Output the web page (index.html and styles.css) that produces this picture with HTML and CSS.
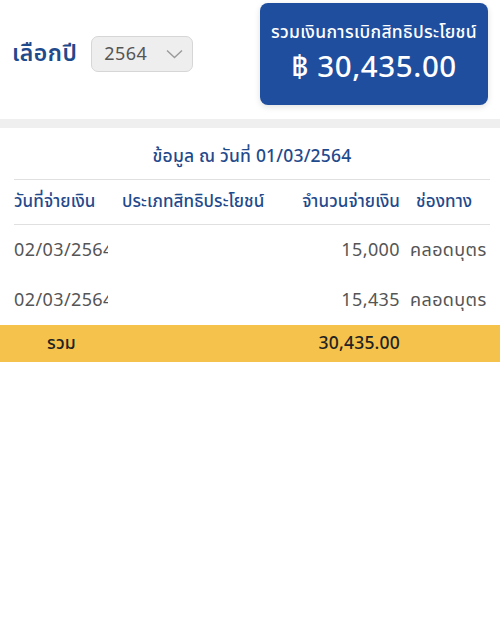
FILE: index.html
```html
<!DOCTYPE html>
<html lang="th">
<head>
<meta charset="utf-8">
<link rel="stylesheet" href="styles.css">
</head>
<body>
<div class="top">
  <div class="year">
    <span class="year-label">เลือกปี</span>
    <div class="select">
      <span>2564</span>
      <svg class="chev" width="17" height="10" viewBox="0 0 17 10"><path d="M1 1.5 L8.5 8.5 L16 1.5" fill="none" stroke="#9a9a9a" stroke-width="1.4"/></svg>
    </div>
  </div>
  <div class="card">
    <div class="card-title">รวมเงินการเบิกสิทธิประโยชน์</div>
    <div class="card-amount">฿ 30,435.00</div>
  </div>
</div>
<div class="band"></div>
<div class="data">
  <div class="asof">ข้อมูล ณ วันที่ 01/03/2564</div>
  <div class="row head">
    <div class="c1">วันที่จ่ายเงิน</div>
    <div class="c2">ประเภทสิทธิประโยชน์</div>
    <div class="c3">จำนวนจ่ายเงิน</div>
    <div class="c4">ช่องทาง</div>
  </div>
  <div class="row body">
    <div class="c1 clip">02/03/2564</div>
    <div class="c2"></div>
    <div class="c3">15,000</div>
    <div class="c4">คลอดบุตร</div>
  </div>
  <div class="row body">
    <div class="c1 clip">02/03/2564</div>
    <div class="c2"></div>
    <div class="c3">15,435</div>
    <div class="c4">คลอดบุตร</div>
  </div>
</div>
<div class="total">
  <div class="t1">รวม</div>
  <div class="t3">30,435.00</div>
</div>
</body>
</html>
```

FILE: styles.css
```css
* { box-sizing: border-box; }
body {
  margin: 0;
  background: #fff;
  font-family: "Noto Sans Thai", "Noto Sans", "DejaVu Sans", sans-serif;
  color: #555;
}
.top {
  height: 119px;
  display: flex;
  justify-content: space-between;
  align-items: flex-start;
  padding: 3px 12px 0 12px;
}
.year {
  display: flex;
  align-items: center;
  gap: 14px;
  margin-top: 33px;
}
.year-label {
  font-size: 23px;
  font-weight: 600;
  letter-spacing: 0.5px;
  color: #1f4a8c;
}
.select {
  width: 102px;
  height: 36px;
  background: #eeeeee;
  border: 1.5px solid #d6d6d6;
  border-radius: 7px;
  display: flex;
  align-items: center;
  justify-content: space-between;
  padding: 0 9px 0 12px;
  font-size: 18px;
  letter-spacing: 0.4px;
  color: #555;
}
.card {
  width: 228px;
  height: 102px;
  background: #1f4e9f;
  border-radius: 8px;
  box-shadow: 0 2px 6px rgba(0,0,0,0.12);
  color: #fff;
  display: flex;
  flex-direction: column;
  align-items: center;
  justify-content: center;
}
.card-title { font-size: 17.5px; font-weight: 500; letter-spacing: 0.3px; }
.card-amount { font-size: 29.5px; font-weight: 500; letter-spacing: 0.6px; }
.band { height: 9px; background: #efefef; }
.data { padding: 0 10px 0 14px; }
.asof {
  text-align: center;
  color: #1f4a8c;
  font-size: 17.5px;
  font-weight: 500;
  letter-spacing: 0.2px;
  height: 52px;
  display: flex;
  align-items: center;
  justify-content: center;
  padding-top: 6px;
  border-bottom: 1.5px solid #e0e0e0;
}
.row {
  display: grid;
  grid-template-columns: 94px 166px 126px 1fr;
  align-items: center;
  font-size: 18px;
  letter-spacing: 0.4px;
}
.row > div { white-space: nowrap; }
.head {
  height: 45px;
  color: #1f4a8c;
  font-weight: 500;
  font-size: 17px;
  letter-spacing: 0.1px;
  border-bottom: 1.5px solid #e0e0e0;
}
.head .c2 { padding-left: 14px; }
.head .c3 { text-align: right; }
.head .c4 { padding-left: 16px; }
.body {
  height: 50px;
  color: #555;
}
.clip { overflow: hidden; text-overflow: clip; }
.body .c3 { text-align: right; }
.body .c4 { padding-left: 10px; }
.total {
  height: 37px;
  background: #f5c24c;
  display: grid;
  grid-template-columns: 260px 140px;
  align-items: center;
  font-size: 17.5px;
  letter-spacing: 0.2px;
  font-weight: 500;
  color: #222;
}
.t1 { padding-left: 47px; }
.t3 { text-align: right; }
```
